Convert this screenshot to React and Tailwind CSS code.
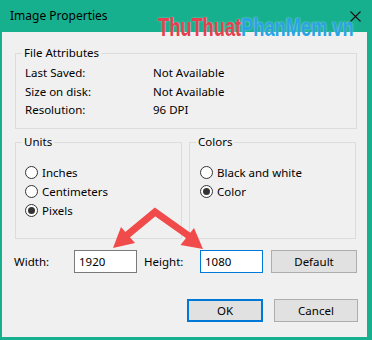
import React from "react";

const font = { fontFamily: '"Noto Sans", "Open Sans", sans-serif' };

function Radio({ checked, label }) {
  return (
    <div className="flex items-center h-[19px]">
      <span className="w-[13px] h-[13px] rounded-full border border-[#333333] bg-white flex items-center justify-center">
        {checked && <span className="w-[7px] h-[7px] rounded-full bg-[#333333]" />}
      </span>
      <span className="ml-[4px]">{label}</span>
    </div>
  );
}

function Group({ title, className, inner, children }) {
  return (
    <fieldset className={"border border-[#dcdcdc] " + className}>
      <legend className="ml-[6px] px-[2px] leading-[16px]">{title}</legend>
      <div className={inner}>{children}</div>
    </fieldset>
  );
}

export default function App() {
  return (
    <div
      className="relative w-[372px] h-[340px] bg-[#17b08f] text-[11.5px] text-black flex flex-col overflow-hidden"
      style={font}
    >
      <div className="h-[32px] shrink-0 flex items-center pl-[10px] pr-[11px]">
        <span className="text-[12px]">Image Properties</span>
        <span className="ml-auto">
          <svg width="11" height="11" viewBox="0 0 11 11">
            <path d="M0.5 0.5 L10.5 10.5 M10.5 0.5 L0.5 10.5" stroke="#111" strokeWidth="1.1" />
          </svg>
        </span>
      </div>

      <div className="ml-[2px] w-[365px] h-[305px] bg-[#f0f0f0] flex flex-col pl-[13px] pt-[13px]">
        <Group title="File Attributes" className="w-[342px] h-[84px]" inner="pl-[9px] pt-[3px]">
          <div className="grid grid-cols-[128px_1fr] leading-[18.5px]">
            <span>Last Saved:</span>
            <span>Not Available</span>
            <span>Size on disk:</span>
            <span>Not Available</span>
            <span>Resolution:</span>
            <span>96 DPI</span>
          </div>
        </Group>

        <div className="flex gap-[7px] mt-[5px]">
          <Group title="Units" className="w-[167px] h-[105px]" inner="pl-[9px] pt-[13px]">
            <Radio label="Inches" />
            <Radio label="Centimeters" />
            <Radio checked label="Pixels" />
          </Group>
          <Group title="Colors" className="w-[167px] h-[105px]" inner="pl-[10px] pt-[13px]">
            <Radio label="Black and white" />
            <Radio checked label="Color" />
          </Group>
        </div>

        <div className="flex items-center mt-[11px] -ml-[1px]">
          <span className="w-[60px]">Width:</span>
          <div className="w-[63px] h-[23px] border border-[#7a7a7a] bg-white flex items-center pl-[4px]">1920</div>
          <span className="ml-[7px] w-[56px]">Height:</span>
          <div className="w-[63px] h-[23px] border border-[#0078d7] bg-white flex items-center pl-[4px]">1080</div>
          <button className="ml-[8px] w-[86px] h-[23px] border border-[#adadad] bg-[#e1e1e1] flex items-center justify-center">
            Default
          </button>
        </div>

        <div className="flex justify-end mt-[26px] pr-[9px] gap-[11px]">
          <button className="w-[76px] h-[23px] border-2 border-[#0078d7] bg-[#e1e1e1] flex items-center justify-center">
            OK
          </button>
          <button className="w-[84px] h-[23px] border border-[#adadad] bg-[#e1e1e1] flex items-center justify-center">
            Cancel
          </button>
        </div>
      </div>

      <div
        className="absolute left-[158px] top-[12px] text-[25px] font-bold leading-[30px] scale-x-[0.73] origin-left whitespace-nowrap pointer-events-none [text-shadow:0_0_2px_rgba(255,255,255,0.6)]"
        style={{ fontFamily: '"Liberation Sans", Arial, sans-serif' }}
      >
        <span className="text-[#e4404d]">ThuThuat</span>
        <span className="text-[#2aa3e6]">PhanMem.vn</span>
      </div>

      <svg className="absolute left-0 top-0 pointer-events-none" width="372" height="340" viewBox="0 0 372 340">
        <polyline points="126,236 155,212 189,236" fill="none" stroke="#f04a4a" strokeWidth="7" strokeLinejoin="miter" />
        <polygon points="113,248 135,243 121,227" fill="#f04a4a" />
        <polygon points="203,249 180.5,245 194,228" fill="#f04a4a" />
      </svg>
    </div>
  );
}
